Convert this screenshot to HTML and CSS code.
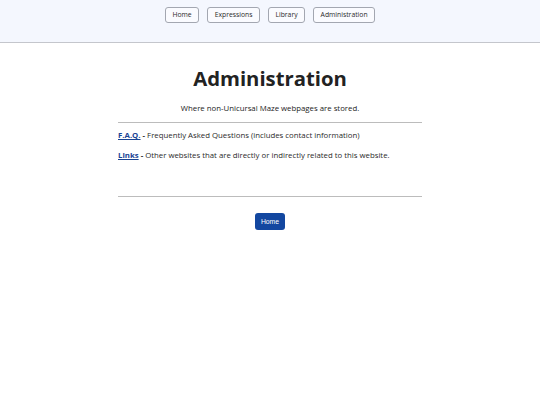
FILE: index.html
```html
<!DOCTYPE html>
<html>
<head>
<meta charset="utf-8">
<link rel="stylesheet" href="styles.css">
</head>
<body>
<header class="topbar">
  <nav class="nav">
    <a class="nav-btn" href="#">Home</a>
    <a class="nav-btn" href="#">Expressions</a>
    <a class="nav-btn" href="#">Library</a>
    <a class="nav-btn" href="#">Administration</a>
  </nav>
</header>
<main class="content">
  <h1 class="title">Administration</h1>
  <p class="subtitle">Where non-Unicursal Maze webpages are stored.</p>
  <hr class="rule">
  <p class="item"><a class="link" href="#">F.A.Q.</a> <b>-</b> Frequently Asked Questions (includes contact information)</p>
  <p class="item"><a class="link" href="#">Links</a> <b>-</b> Other websites that are directly or indirectly related to this website.</p>
  <hr class="rule rule-bottom">
  <div class="actions"><a class="home-btn" href="#">Home</a></div>
</main>
</body>
</html>
```

FILE: styles.css
```css
html, body {
  margin: 0;
  padding: 0;
  background: #ffffff;
  font-family: "Open Sans", "Noto Sans", sans-serif;
  color: #222;
}
.topbar {
  background: #f4f7fe;
  border-bottom: 1px solid #c4c6cc;
  height: 43px;
  box-sizing: border-box;
}
.nav {
  display: flex;
  justify-content: center;
  gap: 8px;
  padding-top: 7px;
}
.nav-btn {
  display: block;
  height: 16px;
  line-height: 14px;
  box-sizing: border-box;
  padding: 0 6.5px;
  border: 1px solid #a3a7b1;
  border-radius: 3px;
  background: #fafbff;
  color: #2a2a2a;
  font-size: 6.8px;
  text-decoration: none;
}
.content {
  width: 304px;
  margin: 0 auto;
}
.title {
  margin: 0;
  padding-top: 21px;
  text-align: center;
  font-size: 20.3px;
  font-weight: 700;
  line-height: 28px;
  color: #222;
}
.subtitle {
  margin: 10px 0 0;
  text-align: center;
  font-size: 7.8px;
  line-height: 12px;
}
.rule {
  border: 0;
  border-top: 1px solid #bcbcbc;
  margin: 8px 0 6px;
}
.rule-bottom {
  margin: 35px 0 16px;
}
.item {
  margin: 0 0 8px;
  font-size: 7.8px;
  line-height: 12px;
  color: #2a2a2a;
}
.item b {
  font-weight: 700;
}
.link {
  color: #1a4594;
  font-weight: 700;
  text-decoration: underline;
}
.actions {
  display: flex;
  justify-content: center;
}
.home-btn {
  display: block;
  width: 30px;
  height: 17px;
  line-height: 17px;
  text-align: center;
  background: #1347a0;
  color: #fff;
  border-radius: 3px;
  font-family: "Liberation Sans", sans-serif;
  font-size: 6.8px;
  text-decoration: none;
}
```
